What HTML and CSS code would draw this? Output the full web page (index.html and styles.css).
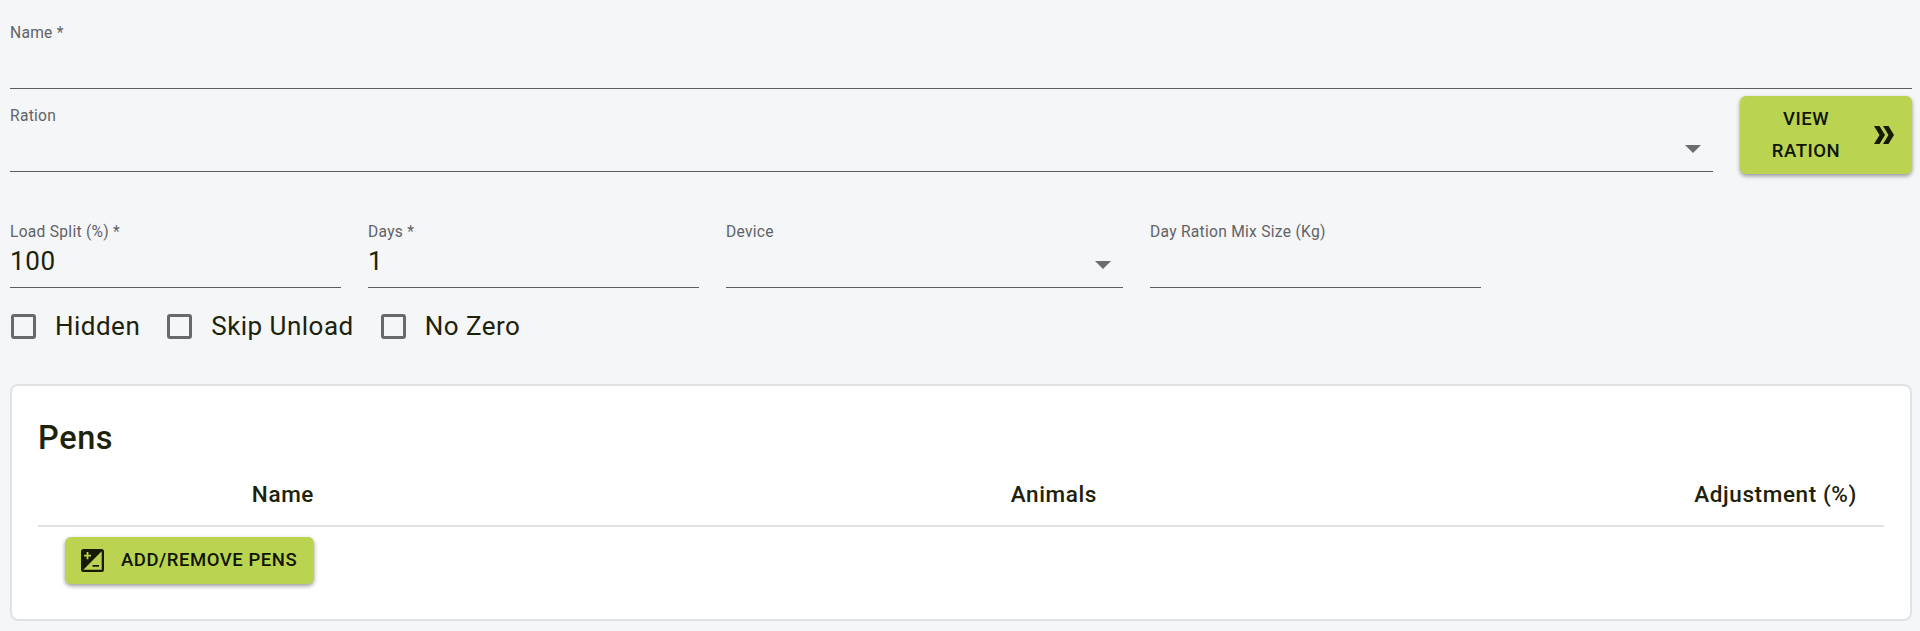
FILE: index.html
```
<!DOCTYPE html>
<html lang="en">
<head>
<meta charset="UTF-8">
<meta name="viewport" content="width=device-width, initial-scale=1.0">
<title>Load</title>
<link rel="stylesheet" href="styles.css">
</head>
<body>
<form class="load-form">
  <div class="field">
    <label for="name">Name *</label>
    <input id="name" type="text">
  </div>

  <div class="ration-row">
    <div class="field">
      <span class="label">Ration</span>
      <div class="select"><span class="arrow"></span></div>
    </div>
    <button type="button" class="btn btn-view">
      <span class="btn-text">VIEW RATION</span>
      <svg class="chevrons" width="20" height="18" viewBox="0 0 20 18"><path d="M0 0h5.500l5.500 9-5.500 9H0l5.500-9zM9 0h5.500l5.500 9-5.500 9H9l5.500-9z"/></svg>
    </button>
  </div>

  <div class="details-row">
    <div class="field">
      <label for="split">Load Split (%) *</label>
      <input id="split" type="text" value="100">
    </div>
    <div class="field">
      <label for="days">Days *</label>
      <input id="days" type="text" value="1">
    </div>
    <div class="field">
      <span class="label">Device</span>
      <div class="select"><span class="arrow"></span></div>
    </div>
    <div class="field">
      <label for="mix">Day Ration Mix Size (Kg)</label>
      <input id="mix" type="text">
    </div>
  </div>

  <div class="checks">
    <label class="check"><input type="checkbox">Hidden</label>
    <label class="check"><input type="checkbox">Skip Unload</label>
    <label class="check"><input type="checkbox">No Zero</label>
  </div>

  <div class="card">
    <h2>Pens</h2>
    <table>
      <thead>
        <tr><th class="col-name">Name</th><th class="col-animals">Animals</th><th>Adjustment (%)</th></tr>
      </thead>
    </table>
    <button type="button" class="btn btn-pens">
      <svg width="23" height="23" viewBox="0 0 23 23">
        <path fill-rule="evenodd" d="M2.500 0h18A2.500 2.500 0 0 1 23 2.500v18a2.500 2.500 0 0 1-2.500 2.500h-18A2.500 2.500 0 0 1 0 20.500v-18A2.500 2.500 0 0 1 2.500 0zM20.700 2.300L2.300 20.700h18.400zM5.600 3v2.700H3v1.800h2.600v2.700h1.800V7.500H10V5.700H7.400V3zM11.500 16h6.500v1.800h-6.500z"/>
      </svg>
      <span class="btn-text">ADD/REMOVE PENS</span>
    </button>
  </div>
</form>
</body>
</html>
```

FILE: styles.css
```
* {
  box-sizing: border-box;
}
body {
  margin: 0;
  font-family: Roboto, sans-serif;
  background-color: #f4f6f8;
  color: #1d220a;
}
.load-form {
  padding: 6px 8px 0 10px;
}
.field {
  display: flex;
  flex-direction: column;
  height: 83px;
  padding-top: 17px;
  border-bottom: 1px solid #5c5d60;
}
.field label,
.field .label {
  font-size: 15.6px;
  line-height: 20px;
  letter-spacing: 0.27px;
  color: #626366;
}
.field input {
  width: 100%;
  height: 38px;
  padding: 0;
  border: none;
  outline: none;
  background: none;
  font-family: inherit;
  font-size: 26px;
  letter-spacing: 0.6px;
  color: inherit;
}
.select {
  display: flex;
  justify-content: flex-end;
  padding: 19px 12px 0 0;
}
.arrow {
  border: 8px solid transparent;
  border-top-color: #6c6d70;
  border-bottom: none;
}
.ration-row {
  display: flex;
  gap: 27px;
}
.ration-row .field {
  flex: 1;
}
.btn {
  display: flex;
  align-items: center;
  border: none;
  border-radius: 6px;
  background-color: #bad452;
  color: #0f1401;
  box-shadow: 0 2px 4px rgba(0, 0, 0, 0.4);
  font-family: inherit;
  font-size: 18.5px;
  font-weight: 500;
  line-height: 32px;
  letter-spacing: 0.55px;
  cursor: pointer;
}
.btn svg {
  fill: #151a03;
  flex: none;
}
.btn-view {
  width: 172px;
  height: 78px;
  margin-top: 7px;
  padding: 0 18px 0 24px;
}
.btn-view .btn-text {
  flex: 1;
  padding-right: 26px;
}
.details-row {
  display: grid;
  grid-template-columns: 331px 331px 397px 331px;
  column-gap: 27px;
  margin-top: 31px;
}
.checks {
  display: flex;
  gap: 26px;
  margin-top: 20px;
}
.check {
  display: flex;
  align-items: center;
  height: 36px;
  font-size: 26px;
  letter-spacing: 0.48px;
}
.check input {
  appearance: none;
  width: 25px;
  height: 25px;
  margin: 0 19px 0 1px;
  border: 3px solid #68696b;
  border-radius: 3px;
}
.card {
  height: 237px;
  margin-top: 40px;
  padding: 0 26px;
  border: 2px solid #e0e2e4;
  border-radius: 8px;
  background-color: #fff;
}
h2 {
  margin: 0;
  padding-top: 33px;
  font-size: 32.5px;
  font-weight: 500;
  line-height: 39px;
  letter-spacing: 0.6px;
}
table {
  width: 100%;
  table-layout: fixed;
  border-collapse: collapse;
}
th {
  height: 68px;
  padding: 4px 27px 0 0;
  border-bottom: 2px solid #e0e1e2;
  font-size: 22.5px;
  font-weight: 500;
  letter-spacing: 0.6px;
  text-align: right;
}
.col-name {
  width: 303px;
}
.col-animals {
  width: 783px;
}
.btn-pens {
  width: 249px;
  height: 47px;
  margin: 10px 0 0 27px;
  padding: 0 16px 1px;
}
.btn-pens .btn-text {
  padding-left: 17px;
  white-space: nowrap;
}
```
